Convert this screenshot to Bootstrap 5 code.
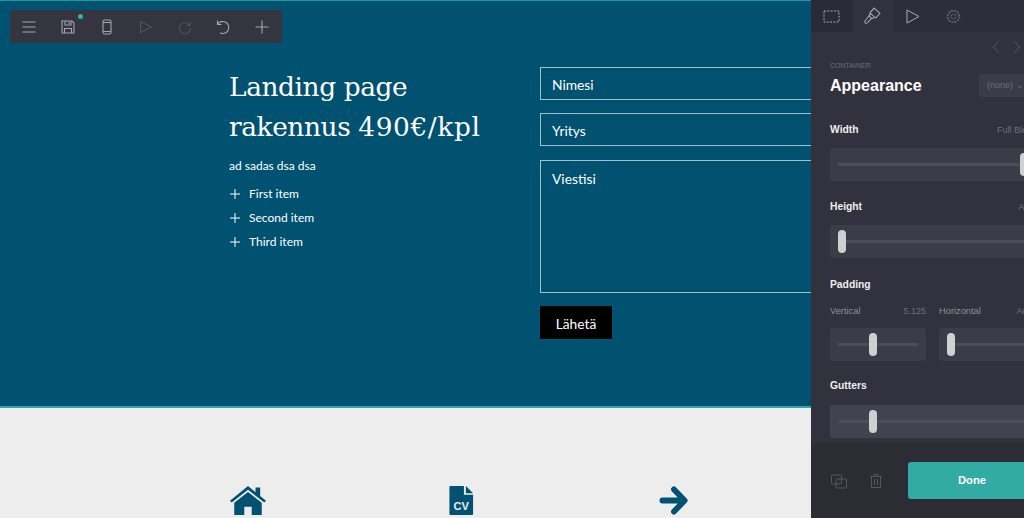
<!DOCTYPE html>
<html lang="fi">
<head>
<meta charset="utf-8">
<title>Landing page</title>
<link rel="stylesheet" href="https://cdn.jsdelivr.net/npm/bootstrap@5.3.0/dist/css/bootstrap.min.css">
<style>
html,body{height:518px;overflow:hidden;background:#ededed}
body{font-family:"Lato","Open Sans",sans-serif;font-size:12px;color:#fff;position:relative}
.hero-sec{height:408px;background:#005270;border-top:1px solid #1a9a9e;border-bottom:2px solid #2fa9a6;padding:66px 0 0 229px}
.hero-left{width:311px}
.hero-title{font-family:"DejaVu Serif","Liberation Serif",serif;font-size:26.4px;line-height:40px;font-weight:400;margin:0 0 10px;letter-spacing:-.4px;color:#fff}
.hero-price{letter-spacing:.6px}
.hero-sub{margin:0 0 8px;line-height:17px}
.plus-list{list-style:none;padding:0;margin:0}
.plus-list li{height:24px;line-height:24px}
.plus-list svg{width:10px;height:10px;margin:0 9px 0 1px;vertical-align:-1px}
.form-col{width:400px;flex:none}
.fld{height:33px;border:1px solid #9fc0cc;padding:0 11px;font-size:13.8px;line-height:33px;margin-bottom:13px;color:#fff}
.fld-area{height:133px;margin-top:14px;padding-top:8px;line-height:20px}
.send-btn{width:72px;height:33px;background:#000;color:#fff;border:0;border-radius:0;font-size:13.8px;padding:3px 0 0}
.send-btn:hover{background:#000;color:#fff}
.ico-sec{height:110px;padding:78px 0 0 230px}
.ico-a{width:219px}
.ico-b{width:210px}
.toolbar{position:absolute;left:10px;top:10px;width:272px;height:33px;background:#34353f;border-radius:3px}
.tb-btn{width:38.8px;height:33px;flex:none;position:relative}
.tb-btn svg{width:16px;height:16px;fill:none;stroke:#a6a7ac;stroke-width:1.1}
.tb-dim svg{stroke:#50515b}
.save-dot{position:absolute;top:4px;right:5px;width:5px;height:5px;border-radius:50%;background:#2bb5ae}
.side-panel{position:absolute;left:811px;top:0;width:213px;height:518px;background:#31323e;color:#fff;overflow:hidden;font-family:"Liberation Sans",sans-serif}
.tab-row{height:32px;background:#2d2e39}
.tab-item{width:40px;height:32px;flex:none}
.tab-item svg{width:17px;height:17px;fill:none;stroke:#a9aab0;stroke-width:1}
.tab-first{width:42px;background:#2a2b36}
.tab-first svg{margin-right:2px}
.tab-on{background:#31323e}
.tab-on svg{margin-right:3px;width:18px;height:18px}
.tab-play svg{margin-right:2px}
.tab-dim svg{stroke:#5d5e68}
.pager{height:30px;padding-left:181px;gap:13px}
.pager svg{width:8px;height:14px;fill:none;stroke:#4e4f59;stroke-width:1.1}
.pn-body{width:226px;padding-left:19px}
.pn-head{height:35px}
.pn-kicker{font-size:7px;color:#6d6e77;line-height:8px;height:8px;margin-bottom:4px}
.pn-title{font-weight:700;font-size:16px;line-height:23px;color:#fff}
.pn-select{width:58px;height:23px;background:#3b3c47;font-size:9px;color:#6e6f79;border-radius:2px;padding-left:8px;line-height:23px;align-self:flex-end;flex:none}
.pn-label{font-size:10.3px;line-height:14px;font-weight:700;color:#eee}
.pn-value{font-size:9px;color:#6f7079;font-weight:400;white-space:nowrap}
.sub-label{font-size:9.3px;line-height:14px;color:#8f9097}
.track-box{background:#3b3c47;height:33px;border-radius:3px;position:relative}
.track-line{position:absolute;left:8px;right:8px;top:15px;height:3px;background:#4c4d58}
.track-knob{position:absolute;top:5px;width:8px;height:23px;background:#d0d0d3;border-radius:4px}
.mt-w{margin-top:26px}
.mt-t{margin-top:11px}
.mt-h{margin-top:19px}
.mt-p{margin-top:20px}
.mt-s{margin-top:12px}
.mt-st{margin-top:10px}
.mt-g{margin-top:18px}
.mt-gt{margin-top:12px}
.two-col{display:grid;grid-template-columns:96px 96px;column-gap:13px;width:205px}
.track-gut{background:#42434e}
.foot-row{height:75px;background:#2c2c35;margin-top:5px;padding-left:20px;width:245px}
.foot-ico{width:16px;height:16px;fill:none;stroke:#55565f;stroke-width:1;flex:none}
.foot-a{margin-right:21px}
.foot-b{margin-right:24px}
.done-btn{width:128px;height:37px;background:#32aba5;border:0;border-radius:3px;color:#fff;font-size:11.2px;font-weight:700;padding:0;flex:none}
</style>
</head>
<body>
<section class="hero-sec d-flex">
  <div class="hero-left">
    <h1 class="hero-title">Landing page<br>rakennus <span class="hero-price">490€/kpl</span></h1>
    <p class="hero-sub">ad sadas dsa dsa</p>
    <ul class="plus-list">
      <li><svg viewBox="0 0 10 10"><path d="M5 0v10M0 5h10" stroke="#fff" stroke-width="1"/></svg>First item</li>
      <li><svg viewBox="0 0 10 10"><path d="M5 0v10M0 5h10" stroke="#fff" stroke-width="1"/></svg>Second item</li>
      <li><svg viewBox="0 0 10 10"><path d="M5 0v10M0 5h10" stroke="#fff" stroke-width="1"/></svg>Third item</li>
    </ul>
  </div>
  <form class="form-col">
    <div class="fld">Nimesi</div>
    <div class="fld">Yritys</div>
    <div class="fld fld-area">Viestisi</div>
    <button type="button" class="btn send-btn">Lähetä</button>
  </form>
</section>

<section class="ico-sec d-flex">
  <div class="ico-a">
    <svg width="36" height="29" viewBox="1 1 34 28.500" preserveAspectRatio="none" fill="#005270"><path d="M18 1 1 15.500l1.600 1.800L18 4.600l15.400 12.700 1.600-1.800-5.500-4.600V2.500h-4.400v4.600z"/><path d="M18 7 5 17.500V29.500h9.500v-8h7v8H31V17.500z"/></svg>
  </div>
  <div class="ico-b">
    <svg width="25" height="29" viewBox="0 0 25 30"><path d="M1 0h14v9h9.500v20a1 1 0 0 1-1 1H1a1 1 0 0 1-1-1V1a1 1 0 0 1 1-1z" fill="#005270"/><path d="M17 0l7.500 7.500H17z" fill="#005270"/><text x="12.200" y="25" text-anchor="middle" font-family="Liberation Sans" font-weight="700" font-size="11.500" fill="#ededed">CV</text></svg>
  </div>
  <div>
    <svg width="30" height="29" viewBox="0 0 30 30"><path d="M3 15h22M15 3.500 26 15 15 26.500" fill="none" stroke="#005270" stroke-width="6" stroke-linecap="round" stroke-linejoin="round"/></svg>
  </div>
</section>

<div class="toolbar d-flex align-items-center">
  <div class="tb-btn d-flex align-items-center justify-content-center"><svg viewBox="0 0 16 16"><path d="M1.500 3h13M1.500 8h13M1.500 13h13"/></svg></div>
  <div class="tb-btn d-flex align-items-center justify-content-center"><svg viewBox="0 0 16 16"><path d="M2 2h10l2 2v10H2zM5 2v4h6V2M9 3v2M4.500 14V9.500h7V14"/></svg><span class="save-dot"></span></div>
  <div class="tb-btn d-flex align-items-center justify-content-center"><svg viewBox="0 0 16 16"><rect x="4" y="1" width="8" height="14" rx="1.500"/><path d="M4 3.500h8M4 12.500h8"/></svg></div>
  <div class="tb-btn tb-dim d-flex align-items-center justify-content-center"><svg viewBox="0 0 16 16"><path d="M2.500 2.500 13.500 8 2.500 13.500z"/></svg></div>
  <div class="tb-btn tb-dim d-flex align-items-center justify-content-center"><svg viewBox="0 0 16 16"><path d="M13 3v3.500H9.500M12.800 6.500A5.500 5.500 0 1 0 13.500 9"/></svg></div>
  <div class="tb-btn d-flex align-items-center justify-content-center"><svg viewBox="0 0 16 16"><path d="M2.500 1.500v4H6.500M2.700 5.300A6 6 0 1 1 5 13.800"/></svg></div>
  <div class="tb-btn d-flex align-items-center justify-content-center"><svg viewBox="0 0 16 16"><path d="M8 1.500v13M1.500 8h13"/></svg></div>
</div>

<aside class="side-panel">
  <div class="tab-row d-flex">
    <div class="tab-item tab-first d-flex align-items-center justify-content-center"><svg viewBox="0 0 17 17"><rect x="1" y="3" width="15" height="11" stroke-dasharray="2 1.300"/></svg></div>
    <div class="tab-item tab-on d-flex align-items-center justify-content-center"><svg viewBox="0 0 17 17"><path d="M10.500 1 16 6l-4 4.500L6.500 5.500zM7 6 5.500 8.500 8.500 11l2-1M6 8 2 13c-1 1.500.5 3 2 2l4.500-4.500"/></svg></div>
    <div class="tab-item tab-play d-flex align-items-center justify-content-center"><svg viewBox="0 0 17 17"><path d="M3 2l12 6.500L3 15z"/></svg></div>
    <div class="tab-item tab-dim d-flex align-items-center justify-content-center"><svg viewBox="0 0 17 17"><circle cx="8.500" cy="8.500" r="2.500"/><circle cx="8.500" cy="8.500" r="5.800" stroke-width="2" stroke-dasharray="2 1"/></svg></div>
  </div>
  <div class="pager d-flex align-items-center">
    <svg viewBox="0 0 8 14"><path d="M7 1 1.500 7 7 13"/></svg>
    <svg viewBox="0 0 8 14"><path d="M1 1l5.500 6L1 13"/></svg>
  </div>
  <div class="pn-body">
    <div class="pn-head d-flex justify-content-between">
      <div>
        <div class="pn-kicker">CONTAINER</div>
        <div class="pn-title">Appearance</div>
      </div>
      <div class="pn-select">(none) ⌄</div>
    </div>

    <div class="pn-label mt-w d-flex justify-content-between"><span>Width</span><span class="pn-value">Full Bleed</span></div>
    <div class="track-box mt-t"><div class="track-line"></div><div class="track-knob" style="left:190px"></div></div>

    <div class="pn-label mt-h d-flex justify-content-between"><span>Height</span><span class="pn-value">Auto</span></div>
    <div class="track-box mt-t"><div class="track-line"></div><div class="track-knob" style="left:8px"></div></div>

    <div class="pn-label mt-p">Padding</div>
    <div class="two-col mt-s">
      <div class="sub-label d-flex justify-content-between"><span>Vertical</span><span class="pn-value">5.125</span></div>
      <div class="sub-label d-flex justify-content-between"><span>Horizontal</span><span class="pn-value">Auto</span></div>
    </div>
    <div class="two-col mt-st">
      <div class="track-box"><div class="track-line"></div><div class="track-knob" style="left:39px"></div></div>
      <div class="track-box"><div class="track-line"></div><div class="track-knob" style="left:8px"></div></div>
    </div>

    <div class="pn-label mt-g">Gutters</div>
    <div class="track-box track-gut mt-gt"><div class="track-line"></div><div class="track-knob" style="left:39px"></div></div>
  </div>
  <div class="foot-row d-flex align-items-center">
    <svg class="foot-ico foot-a" viewBox="0 0 16 16"><rect x=".5" y="2" width="10" height="9" rx="1"/><rect x="5" y="6" width="10.500" height="9" rx="1"/></svg>
    <svg class="foot-ico foot-b" viewBox="0 0 16 16"><path d="M2 3.500h12M6 3.500V1.500h4v2M3.500 3.500v11h9v-11M6.500 6v6M9.500 6v6"/></svg>
    <button type="button" class="done-btn">Done</button>
  </div>
</aside>
</body>
</html>
